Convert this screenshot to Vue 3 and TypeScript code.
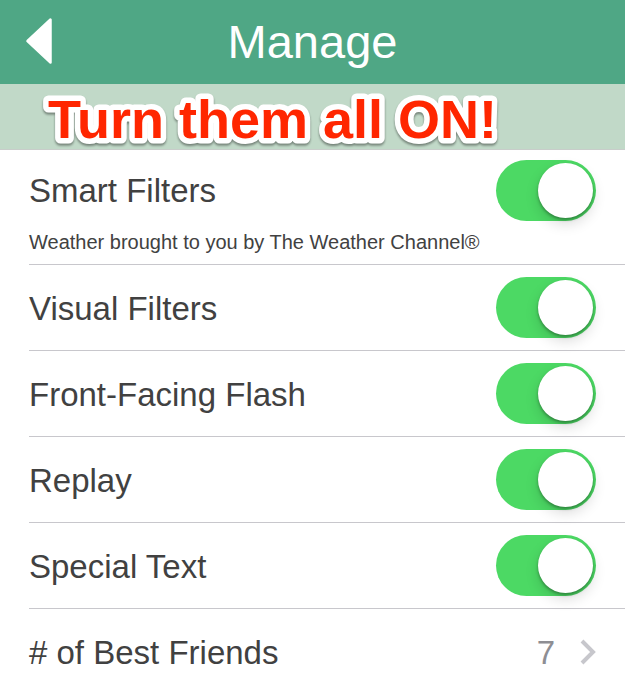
<script setup lang="ts">
import { ref } from 'vue'

interface Setting {
  id: string
  label: string
  note?: string
  on: boolean
}

const settings = ref<Setting[]>([
  { id: 'smart', label: 'Smart Filters', note: 'Weather brought to you by The Weather Channel®', on: true },
  { id: 'visual', label: 'Visual Filters', on: true },
  { id: 'flash', label: 'Front-Facing Flash', on: true },
  { id: 'replay', label: 'Replay', on: true },
  { id: 'text', label: 'Special Text', on: true },
])
const bestFriends = ref(7)
</script>

<template>
  <div class="screen">
    <header class="bar">
      <button class="back" type="button" aria-label="Back">
        <svg width="26" height="46" viewBox="0 0 26 46" aria-hidden="true">
          <path d="M1.5 23 24.5 1.5V44.500Z" fill="#fff" stroke="#fff" stroke-width="2.500" stroke-linejoin="round" />
        </svg>
      </button>
      <h1 class="title">Manage</h1>
    </header>
    <div class="banner">
      <svg class="callout" width="100%" height="65">
        <text x="48" y="54">Turn them all ON!</text>
      </svg>
    </div>
    <main class="list">
      <div v-for="item in settings" :key="item.id" class="row">
        <div class="line">
          <label class="label" :for="item.id">{{ item.label }}</label>
          <input :id="item.id" v-model="item.on" class="switch" type="checkbox" role="switch" />
        </div>
        <p v-if="item.note" class="note">{{ item.note }}</p>
      </div>
      <a class="row link" href="#best-friends">
        <span class="line">
          <span class="label"># of Best Friends</span>
          <span class="value">{{ bestFriends }}</span>
          <svg class="chevron" width="16" height="26" viewBox="0 0 16 26" aria-hidden="true">
            <path d="M2 2 13 13 2 24" fill="none" stroke="#c7c7cc" stroke-width="4" />
          </svg>
        </span>
      </a>
    </main>
  </div>
</template>

<style>
body {
  background: #fff;
}
</style>

<style scoped>
.screen {
  font-family: "Liberation Sans", Arial, sans-serif;
  color: #414141;
  overflow: hidden;
}
.bar {
  display: grid;
  grid-template-columns: 80px 1fr 80px;
  align-items: center;
  height: 84px;
  background: #4fa785;
}
.back {
  display: flex;
  width: 80px;
  height: 84px;
  padding: 18px 26px 20px;
  border: 0;
  background: none;
  cursor: pointer;
}
.title {
  margin: 0;
  color: #fff;
  font-size: 47px;
  font-weight: 400;
  line-height: 84px;
  text-align: center;
}
.banner {
  height: 65px;
  border-bottom: 1px solid #c8cdca;
  background: #c1d9c8;
}
.callout {
  display: block;
  overflow: visible;
  fill: #ff2600;
  font-size: 54px;
  font-weight: 700;
  stroke: #fff;
  stroke-width: 11px;
  stroke-linejoin: round;
  paint-order: stroke fill;
  filter: drop-shadow(0 2px 1px rgba(0, 0, 0, 0.4));
}
.list {
  padding-left: 29px;
}
.row {
  border-bottom: 1px solid #c8c7cc;
}
.line {
  display: flex;
  align-items: center;
  height: 85px;
  padding-right: 29px;
}
.row:first-child .line {
  height: 80px;
}
.label,
.value {
  padding-top: 2px;
  font-size: 33px;
  line-height: 40px;
}
.label {
  flex: 1;
}
.value {
  margin-right: 25px;
  color: #8e8e93;
}
.note {
  margin: 0;
  font-size: 20px;
  line-height: 24px;
  padding-bottom: 10px;
}
.switch {
  appearance: none;
  display: flex;
  flex: none;
  width: 100px;
  height: 61px;
  margin: 0;
  padding: 3px;
  border-radius: 31px;
  background: #e5e5ea;
  cursor: pointer;
}
.switch::before {
  content: "";
  width: 55px;
  height: 55px;
  border-radius: 50%;
  background: #fff;
  box-shadow: 0 2px 3px rgba(0, 0, 0, 0.3), 0 6px 14px rgba(0, 0, 0, 0.14);
}
.switch:checked {
  justify-content: flex-end;
  background: #4cd964;
}
.link {
  display: block;
  border-bottom: 0;
  color: inherit;
  text-decoration: none;
}
</style>
